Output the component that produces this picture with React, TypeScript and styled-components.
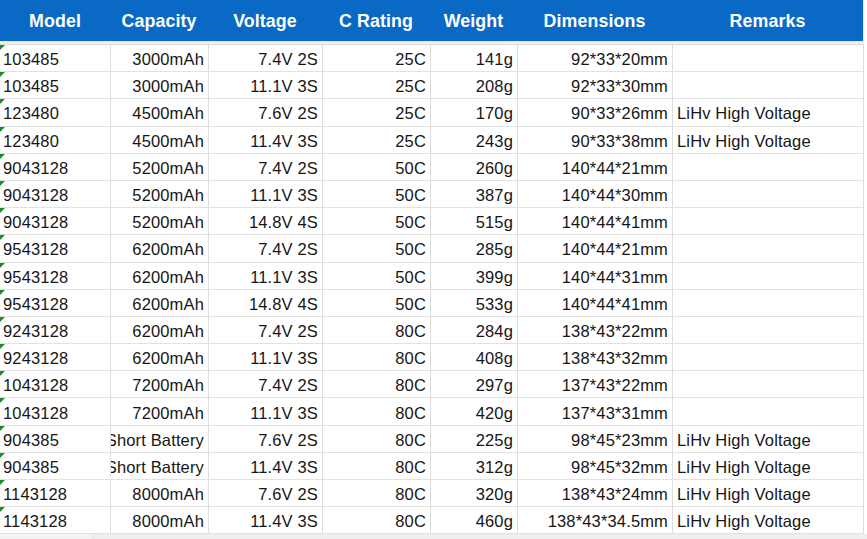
import React from "react";
import styled, { createGlobalStyle } from "styled-components";

const GlobalStyle = createGlobalStyle`
  html, body {
    margin: 0;
    padding: 0;
    background: #ffffff;
    overflow: hidden;
  }
  body {
    font-family: "Liberation Sans", Arial, sans-serif;
  }
`;

const columns = "110px 98px 114px 108px 87px 155px 191px";

const Sheet = styled.div`
  width: 867px;
  height: 539px;
  display: flex;
  flex-direction: column;
  background: #ffffff;
  overflow: hidden;
`;

const HeaderRow = styled.div`
  display: grid;
  grid-template-columns: ${columns};
  height: 41px;
  width: 863px;
  background: #0b69c6;
  border-right: 1px solid #e4eef8;
`;

const HeaderCell = styled.div`
  display: flex;
  align-items: center;
  justify-content: center;
  color: #ffffff;
  font-weight: 700;
  font-size: 17.8px;
  letter-spacing: 0.1px;
  padding-top: 1px;
`;

const Seam = styled.div`
  height: 3px;
  width: 864px;
  background: linear-gradient(#d7e3ef, #f7ecdf 40%, #f7ecdf);
  border-bottom: 1px solid #dedede;
`;

const Body = styled.div`
  display: flex;
  flex-direction: column;
`;

const Row = styled.div`
  display: grid;
  grid-template-columns: ${columns};
  height: 27.2px;
  width: 864px;
  border-bottom: 1.5px solid #e2e2e2;
  box-sizing: border-box;
  border-right: 1px solid #dcdcdc;
`;

const Cell = styled.div<{ $align: "left" | "right"; $flag?: boolean }>`
  position: relative;
  display: flex;
  align-items: center;
  justify-content: ${(p) => (p.$align === "right" ? "flex-end" : "flex-start")};
  padding: 3px 4px 0 4px;
  border-left: 1px solid #dddddd;
  overflow: hidden;
  white-space: nowrap;
  color: #161616;
  font-size: 16.5px;
  letter-spacing: 0.15px;

  &:first-child {
    border-left: none;
    padding-left: 3px;
  }

  ${(p) =>
    p.$flag &&
    `
    &::before {
      content: "";
      position: absolute;
      left: 0;
      top: 0;
      border-top: 5px solid #1e8a2e;
      border-right: 5px solid transparent;
    }
  `}
`;

const ScrollTrack = styled.div`
  flex: 1;
  display: flex;
  background: #eeeeee;
`;

const ScrollThumb = styled.div`
  width: 92px;
  background: #f3f3f3;
  border-right: 1px solid #e6e6e6;
`;

const headers = ["Model", "Capacity", "Voltage", "C Rating", "Weight", "Dimensions", "Remarks"];

const LIHV = "LiHv High Voltage";

const rows: string[][] = [
  ["103485", "3000mAh", "7.4V 2S", "25C", "141g", "92*33*20mm", ""],
  ["103485", "3000mAh", "11.1V 3S", "25C", "208g", "92*33*30mm", ""],
  ["123480", "4500mAh", "7.6V 2S", "25C", "170g", "90*33*26mm", LIHV],
  ["123480", "4500mAh", "11.4V 3S", "25C", "243g", "90*33*38mm", LIHV],
  ["9043128", "5200mAh", "7.4V 2S", "50C", "260g", "140*44*21mm", ""],
  ["9043128", "5200mAh", "11.1V 3S", "50C", "387g", "140*44*30mm", ""],
  ["9043128", "5200mAh", "14.8V 4S", "50C", "515g", "140*44*41mm", ""],
  ["9543128", "6200mAh", "7.4V 2S", "50C", "285g", "140*44*21mm", ""],
  ["9543128", "6200mAh", "11.1V 3S", "50C", "399g", "140*44*31mm", ""],
  ["9543128", "6200mAh", "14.8V 4S", "50C", "533g", "140*44*41mm", ""],
  ["9243128", "6200mAh", "7.4V 2S", "80C", "284g", "138*43*22mm", ""],
  ["9243128", "6200mAh", "11.1V 3S", "80C", "408g", "138*43*32mm", ""],
  ["1043128", "7200mAh", "7.4V 2S", "80C", "297g", "137*43*22mm", ""],
  ["1043128", "7200mAh", "11.1V 3S", "80C", "420g", "137*43*31mm", ""],
  ["904385", "Short Battery", "7.6V 2S", "80C", "225g", "98*45*23mm", LIHV],
  ["904385", "Short Battery", "11.4V 3S", "80C", "312g", "98*45*32mm", LIHV],
  ["1143128", "8000mAh", "7.6V 2S", "80C", "320g", "138*43*24mm", LIHV],
  ["1143128", "8000mAh", "11.4V 3S", "80C", "460g", "138*43*34.5mm", LIHV],
];

// model and remarks read left, the numbers sit right
const alignFor = (i: number): "left" | "right" => (i === 0 || i === 6 ? "left" : "right");

const App = () => {
  return (
    <>
      <GlobalStyle />
      <Sheet>
        <HeaderRow>
          {headers.map((h) => (
            <HeaderCell key={h}>{h}</HeaderCell>
          ))}
        </HeaderRow>
        <Seam />
        <Body>
          {rows.map((r, ri) => (
            <Row key={ri}>
              {r.map((v, ci) => (
                <Cell key={ci} $align={alignFor(ci)} $flag={ci === 0}>
                  {v}
                </Cell>
              ))}
            </Row>
          ))}
        </Body>
        <ScrollTrack>
          <ScrollThumb />
        </ScrollTrack>
      </Sheet>
    </>
  );
};

export default App;
